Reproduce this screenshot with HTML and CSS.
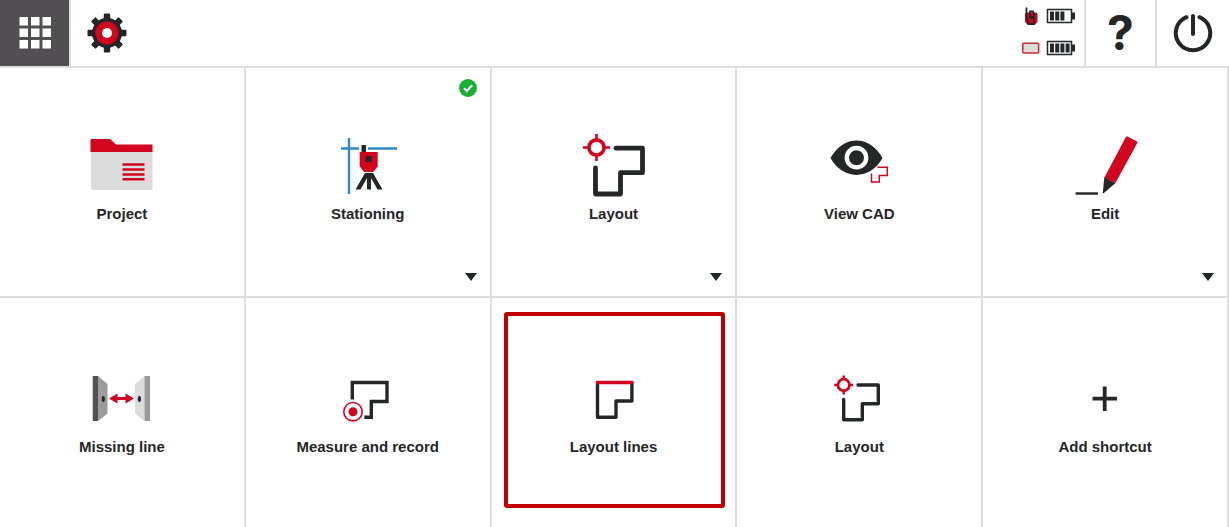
FILE: index.html
```html
<!DOCTYPE html>
<html lang="en">
<head>
  <meta charset="UTF-8">
  <meta name="viewport" content="width=device-width, initial-scale=1.0">
  <title>Home</title>
  <link rel="stylesheet" href="styles.css">
</head>
<body>
  <header class="topbar">
    <button class="bar-btn menu" type="button" aria-label="Menu">
      <svg width="32" height="34" viewBox="0 0 32 34" fill="#fff">
        <path d="M.5 1h8.500v8.500H.5zM12 1h8.500v8.500H12zM23.500 1H32v8.500h-8.500zM.5 12.500h8.500V21H.5zM12 12.500h8.500V21H12zM23.500 12.500H32V21h-8.500zM.5 24h8.500v8.500H.5zM12 24h8.500v8.500H12zM23.500 24H32v8.500h-8.500z"/>
      </svg>
    </button>
    <button class="bar-btn settings" type="button" aria-label="Settings">
      <svg width="40" height="40" viewBox="-20 -20 40 40">
        <g fill="#252628">
          <circle r="15"/>
          <path id="tooth" d="M-5.5 -12L-3.2 -15V-18.500Q-3.2 -19.500 -2.2 -19.500H2.2Q3.2 -19.500 3.2 -18.500V-15L5.500 -12z"/>
          <use href="#tooth" transform="rotate(45)"/>
          <use href="#tooth" transform="rotate(90)"/>
          <use href="#tooth" transform="rotate(135)"/>
          <use href="#tooth" transform="rotate(180)"/>
          <use href="#tooth" transform="rotate(225)"/>
          <use href="#tooth" transform="rotate(270)"/>
          <use href="#tooth" transform="rotate(315)"/>
        </g>
        <circle r="11.500" fill="#d2051e"/>
        <circle r="5" fill="#fff"/>
      </svg>
    </button>

    <div class="status">
      <svg width="18" height="20" viewBox="0 0 18 20">
        <path d="M3.500 6.500h11l1 2v7.500l-3 3H6l-3-3V8.500z" fill="#d2051e"/>
        <path d="M4.500 1.500v10l2 6.500h5.500V8.500L11 5.500H8V12" fill="none" stroke="#252628" stroke-width="1.800"/>
        <path d="M8.500 10h3.500v3H8.500z" fill="#252628"/>
      </svg>
      <svg width="30" height="16" viewBox="0 0 30 16">
        <path d="M1.500 1.500h24v13h-24z" fill="#fff" stroke="#252628" stroke-width="1.500"/>
        <path d="M26 4.500h3v7h-3zM4 3.500h4v9H4zM9.200 3.500h4v9h-4zM14.400 3.500h4v9h-4z" fill="#252628"/>
      </svg>
      <svg width="18" height="20" viewBox="0 0 18 20">
        <rect x=".8" y="5.300" width="15.800" height="9.800" rx="1" fill="#dcdcdc" stroke="#c8283c" stroke-width="1.500"/>
      </svg>
      <svg width="30" height="16" viewBox="0 0 30 16">
        <path d="M1.500 1.500h24v13h-24z" fill="#fff" stroke="#252628" stroke-width="1.500"/>
        <path d="M26 4.500h3v7h-3zM4 3.500h4v9H4zM9.200 3.500h4v9h-4zM14.400 3.500h4v9h-4zM19.600 3.500h4v9h-4z" fill="#252628"/>
      </svg>
    </div>
    <button class="bar-btn help" type="button" aria-label="Help">?</button>
    <button class="bar-btn power" type="button" aria-label="Power">
      <svg width="40" height="40" viewBox="-20 -20 40 40" fill="none" stroke="#252628" stroke-width="4" stroke-linecap="round">
        <path d="M0 -17V1M6.500 -15.800A17.200 17.200 0 1 1 -6.500 -15.800"/>
      </svg>
    </button>
  </header>

  <main class="tiles">
    <button class="tile" type="button">
      <svg class="icon" viewBox="0 0 68 64">
        <path d="M3 17h61.500v39H3z" fill="#dcdcdc"/>
        <path d="M2.500 6q0-1 1-1H22l6 5.500h36.500V18h-62z" fill="#d2051e"/>
        <path d="M34.500 30.500h22M34.500 35.500h22M34.500 40.500h22M34.500 45.200h22" stroke="#d2051e" stroke-width="2.400"/>
      </svg>
      <span class="label">Project</span>
    </button>

    <button class="tile" type="button">
      <svg class="icon" viewBox="0 0 68 64">
        <path d="M15 4v56M7 14.500h18M34 14.500h29" stroke="#3089c8" stroke-width="2.400"/>
        <path d="M27.500 11h4.500v8h-4.500z" fill="#252628"/>
        <path d="M25.700 18h18v14.500l-4.500 5.500h-9l-4.500-5.500z" fill="#d2051e"/>
        <path d="M31.700 22h6v6h-6zM31 39h8l9.500 16.500h-5L37 44v11.500h-4V44l-6.500 11.500h-5z" fill="#252628"/>
      </svg>
      <span class="label">Stationing</span>
      <svg class="badge" viewBox="0 0 18 18">
        <circle cx="9" cy="9" r="9" fill="#1aae34"/>
        <path d="M5 9.300l2.700 2.700 5.500-5.800" fill="none" stroke="#fff" stroke-width="2"/>
      </svg>
      <span class="more"></span>
    </button>

    <button class="tile" type="button">
      <svg class="icon" viewBox="0 0 68 64" fill="none">
        <circle cx="17.500" cy="13.500" r="7.600" stroke="#d2051e" stroke-width="3.600"/>
        <path d="M17.500 0v7M17.500 20v7M4 13.500h7M24 13.500h7" stroke="#d2051e" stroke-width="2.600"/>
        <path d="M37 14.200h26.500v24.500h-22V60h-25V34" stroke="#252628" stroke-width="4.800" stroke-linecap="round" stroke-linejoin="round"/>
      </svg>
      <span class="label">Layout</span>
      <span class="more"></span>
    </button>

    <button class="tile" type="button">
      <svg class="icon" viewBox="0 0 68 64">
        <path d="M5.500 24C18 .5 45 .5 57.500 24C45 46.500 18 46.500 5.500 24z" fill="#252628"/>
        <circle cx="31.500" cy="23.700" r="9.700" fill="none" stroke="#fff" stroke-width="4.400"/>
        <path d="M52.500 33.200h9.800v8.300h-8v6.500h-7.800v-8.500" fill="none" stroke="#d2051e" stroke-width="1.500"/>
      </svg>
      <span class="label">View CAD</span>
    </button>

    <button class="tile" type="button">
      <svg class="icon" viewBox="0 0 68 64">
        <path d="M4.500 59.500h22.500" stroke="#252628" stroke-width="2.400"/>
        <path d="M55 2.700q.5-.8 1.500-.3l9.500 5q.9.500.4 1.400L44.300 49.300l-11-5.600z" fill="#d2051e"/>
        <path d="M33.300 43.200l11 6L31.700 60z" fill="#252628"/>
      </svg>
      <span class="label">Edit</span>
      <span class="more"></span>
    </button>

    <button class="tile shortcut" type="button">
      <svg class="icon" viewBox="0 0 68 64">
        <path d="M4.700 9H10v45H4.700z" fill="#524f53"/>
        <path d="M10 9l9.500 8v29.500L10 54z" fill="#9c9a9d"/>
        <path d="M56.500 9l-9.500 8v29.500l9.500 7.500z" fill="#dcdcdc"/>
        <path d="M56.500 9H62v45h-5.500z" fill="#9c9a9d"/>
        <ellipse cx="15.300" cy="32" rx="1.600" ry="3" fill="#252628"/>
        <ellipse cx="51.400" cy="32" rx="1.600" ry="3" fill="#252628"/>
        <path d="M21 31.500l8.500-5v3.500h8v-3.500l8.500 5-8.500 5v-3.500h-8v3.500z" fill="#d2051e"/>
      </svg>
      <span class="label">Missing line</span>
    </button>

    <button class="tile shortcut" type="button">
      <svg class="icon" viewBox="0 0 68 64" fill="none">
        <path d="M18.300 32.500V15.500h34.700v19H37.300v15.800h-7" stroke="#252628" stroke-width="3.400"/>
        <circle cx="19" cy="44.700" r="9.200" stroke="#d2051e" stroke-width="1.600"/>
        <circle cx="19" cy="44.700" r="4.500" fill="#d2051e"/>
      </svg>
      <span class="label">Measure and record</span>
    </button>

    <button class="tile shortcut selected" type="button">
      <svg class="icon" viewBox="0 0 68 64" fill="none" stroke-width="3.400" stroke-linecap="round" stroke-linejoin="round">
        <path d="M18.500 15.700v34.500h18.500V34h15.900V15.700" stroke="#252628"/>
        <path d="M18.500 15.500h34.400" stroke="#d2051e"/>
      </svg>
      <span class="label">Layout lines</span>
    </button>

    <button class="tile shortcut" type="button">
      <svg class="icon" viewBox="0 0 68 64" fill="none">
        <circle cx="18.700" cy="18" r="5.800" stroke="#d2051e" stroke-width="2.800"/>
        <path d="M18.700 8.500v4.500M18.700 23v4.500M9.200 18h4.500M23.700 18h4.500" stroke="#d2051e" stroke-width="2.400"/>
        <path d="M33 18h20.300v18.700h-16v16H18.700V32.500" stroke="#252628" stroke-width="3.400" stroke-linecap="round" stroke-linejoin="round"/>
      </svg>
      <span class="label">Layout</span>
    </button>

    <button class="tile shortcut" type="button">
      <svg class="icon" viewBox="0 0 68 64">
        <path d="M33.700 19.500V44M21.500 31.700H46" stroke="#252628" stroke-width="3.800"/>
      </svg>
      <span class="label">Add shortcut</span>
    </button>
  </main>
</body>
</html>
```
FILE: styles.css
```css
*,
*::after {
  box-sizing: border-box;
}

body {
  margin: 0;
  min-height: 100vh;
  display: flex;
  flex-direction: column;
  background: #fff;
  color: #252628;
  font-family: "Liberation Sans", Arial, sans-serif;
}

button {
  margin: 0;
  padding: 0;
  border: 0;
  background: none;
  color: inherit;
  font: inherit;
  cursor: pointer;
}

svg {
  display: block;
}

/* top bar */
.topbar {
  display: flex;
  height: 68px;
  border-bottom: 2px solid #dedede;
}

.bar-btn {
  display: flex;
  align-items: center;
  justify-content: center;
  width: 71px;
}

.menu {
  background: #524f53;
  border-right: 2px solid #dedede;
}

.help,
.power {
  border-left: 2px solid #dedede;
}

.help {
  font-family: Inter, sans-serif;
  font-size: 48px;
  font-weight: 700;
  line-height: 64px;
}

.power {
  width: 74px;
}

.status {
  margin-left: auto;
  padding-right: 8px;
  display: grid;
  grid-template-columns: 18px 30px;
  grid-template-rows: 32px 32px;
  column-gap: 6px;
  align-items: center;
}

/* tiles */
.tiles {
  flex: 1;
  display: grid;
  grid-template-columns: repeat(5, 1fr);
  grid-template-rows: 230px minmax(229px, 1fr);
}

.tile {
  position: relative;
  display: flex;
  flex-direction: column;
  align-items: center;
  gap: 6px;
  padding-top: 66px;
  border-right: 2px solid #dedede;
  border-bottom: 2px solid #dedede;
}

.shortcut {
  padding-top: 69px;
  border-bottom: 0;
}

.icon {
  width: 68px;
  height: 64px;
}

.label {
  font-size: 15px;
  font-weight: 700;
  line-height: 20px;
}

/* finished mark in the corner */
.badge {
  position: absolute;
  top: 11px;
  right: 13px;
  width: 18px;
  height: 18px;
}

/* arrow for tiles with a submenu */
.more {
  position: absolute;
  right: 13px;
  bottom: 15px;
  border: 6px solid transparent;
  border-top: 8px solid #252628;
  border-bottom: 0;
}

.selected::after {
  content: "";
  position: absolute;
  top: 14px;
  right: 10px;
  left: 12px;
  height: 196px;
  border: 4px solid #c00000;
  border-radius: 3px;
}
```
